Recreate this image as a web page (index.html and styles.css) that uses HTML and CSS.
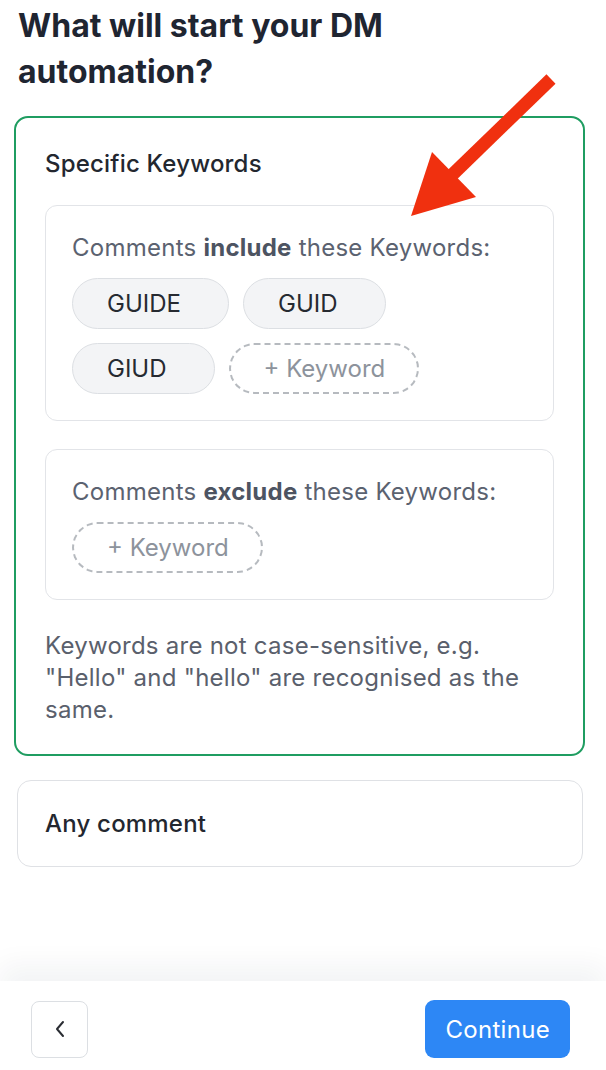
FILE: index.html
```html
<!DOCTYPE html>
<html lang="en">
<head>
  <meta charset="UTF-8">
  <meta name="viewport" content="width=device-width, initial-scale=1.0">
  <title>DM automation trigger</title>
  <link rel="stylesheet" href="styles.css">
</head>
<body>

<main class="page">
  <h1 class="title">What will start your DM automation?</h1>

  <section class="option option-active">
    <h2 class="option-title">Specific Keywords</h2>

    <div class="rule">
      <p class="rule-label">Comments <b>include</b> these Keywords:</p>
      <div class="chips">
        <span class="chip">GUIDE</span>
        <span class="chip">GUID</span>
        <span class="chip">GIUD</span>
        <span class="chip chip-add">+ Keyword</span>
      </div>
    </div>

    <div class="rule">
      <p class="rule-label">Comments <b>exclude</b> these Keywords:</p>
      <div class="chips">
        <span class="chip chip-add">+ Keyword</span>
      </div>
    </div>

    <p class="hint">Keywords are not case-sensitive, e.g. "Hello" and "hello" are recognised as the same.</p>
  </section>

  <section class="option">
    <h2 class="option-title">Any comment</h2>
  </section>
</main>

<footer class="actions">
  <button class="btn-back" aria-label="Back">
    <svg width="12" height="18" viewBox="0 0 12 18"><path d="M9 2 L3 9 L9 16" fill="none" stroke="#2a2d33" stroke-width="2" stroke-linecap="round" stroke-linejoin="round"/></svg>
  </button>
  <button class="btn-continue">Continue</button>
</footer>

<!-- red pointer drawn over the card -->
<svg class="pointer" width="170" height="170" viewBox="400 60 170 170">
  <line x1="551" y1="79" x2="452" y2="175" stroke="#f0300f" stroke-width="13"/>
  <polygon points="411,216 432,152 476,197" fill="#f0300f"/>
</svg>

</body>
</html>
```

FILE: styles.css
```css
* { box-sizing: border-box; }

body {
  margin: 0;
  min-height: 100vh;
  display: flex;
  flex-direction: column;
  font-family: Inter, 'Noto Sans', sans-serif;
  color: #1f2430;
  background: #fff;
  position: relative;
}

.page {
  padding: 3px 21px 0 14px;
  flex: 1;
}

.title {
  max-width: 480px;
  margin: 0 0 21px 4px;
  font-size: 32px;
  line-height: 46px;
  font-weight: 700;
  color: #1f2531;
}

.option {
  border: 1px solid #dfe1e5;
  border-radius: 14px;
  padding: 28px 27px 27px;
  margin: 24px 2px 0 3px;
}

.option-active {
  border: 2px solid #1f9d61;
  margin: 0;
  padding: 31px 29px 28px;
}

.option-title {
  margin: 0;
  font-size: 24px;
  font-weight: 500;
  line-height: 30px;
  color: #23272f;
  letter-spacing: 0.2px;
}

.option-active .option-title {
  margin-bottom: 26px;
}

.rule {
  border: 1px solid #e2e4e8;
  border-radius: 12px;
  padding: 27px 26px 26px;
  margin-bottom: 28px;
}

.rule + .rule {
  margin-bottom: 30px;
}

.rule-label {
  margin: 0 0 15px;
  font-size: 24px;
  line-height: 30px;
  color: #5b6270;
  letter-spacing: 0.25px;
}

.rule-label b {
  font-weight: 700;
  color: #4d5462;
}

.chips {
  display: flex;
  flex-wrap: wrap;
  gap: 14px;
}

.chip {
  display: inline-flex;
  align-items: center;
  height: 51px;
  padding: 0 47px 0 34px;
  border-radius: 26px;
  background: #f3f4f6;
  border: 1px solid #dcdfe3;
  font-size: 24px;
  color: #262a31;
}

.chip-add {
  padding: 0 32px 0 33px;
  background: #fff;
  border: 2px dashed #b6babf;
  color: #8d939c;
}

.hint {
  margin: 0;
  font-size: 24px;
  line-height: 32px;
  color: #5a606c;
  letter-spacing: 0.25px;
}

.actions {
  display: flex;
  justify-content: space-between;
  align-items: center;
  padding: 19px 36px 12px 31px;
  background: #fff;
  box-shadow: 0 -16px 26px rgba(20, 30, 50, 0.05);
}

.btn-back {
  width: 57px;
  height: 57px;
  border: 1px solid #dcdfe3;
  border-radius: 8px;
  background: #fff;
  display: flex;
  align-items: center;
  justify-content: center;
  cursor: pointer;
}

.btn-continue {
  height: 58px;
  padding: 0 20px;
  border: none;
  border-radius: 9px;
  background: #2d87f5;
  color: #fff;
  font-family: inherit;
  font-size: 24px;
  letter-spacing: 0.3px;
  cursor: pointer;
}

.pointer {
  position: absolute;
  left: 400px;
  top: 60px;
}
```
